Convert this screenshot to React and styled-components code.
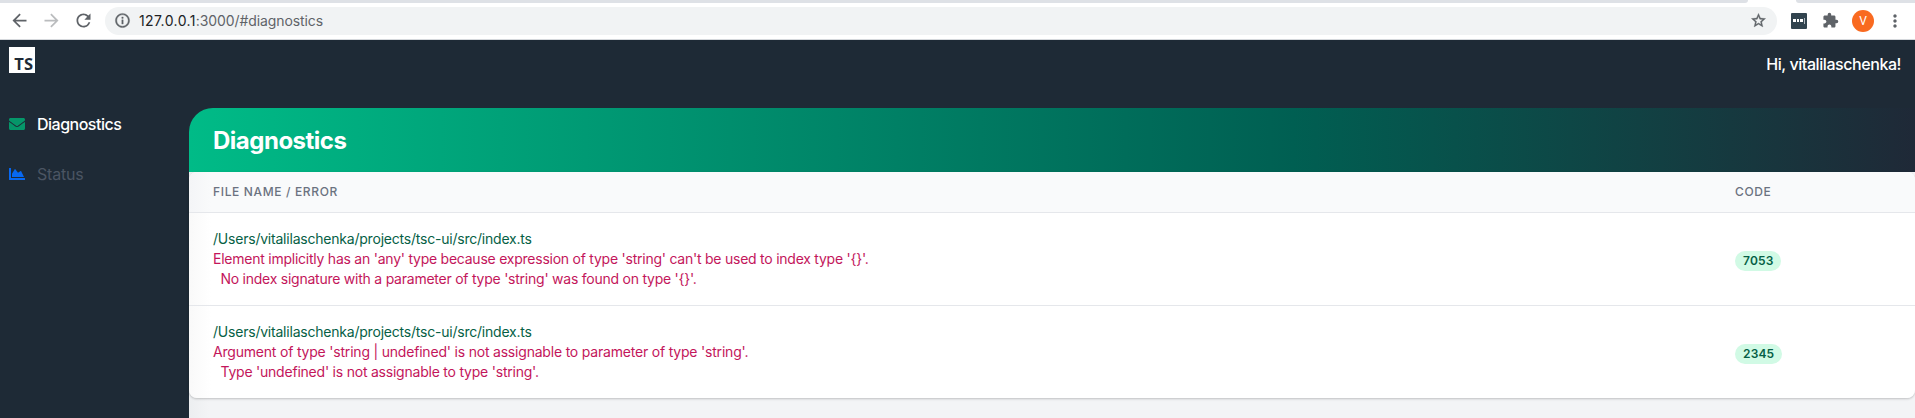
import React from 'react';
import styled, { createGlobalStyle } from 'styled-components';
import { MdArrowBack, MdArrowForward, MdRefresh, MdInfoOutline, MdStarBorder, MdExtension, MdMoreVert } from 'react-icons/md';
import { FaEnvelope, FaChartArea } from 'react-icons/fa';

const GlobalStyle = createGlobalStyle`
  * { box-sizing: border-box; }
  body { margin: 0; background: #f3f4f6; font-family: Inter, "Liberation Sans", sans-serif; }
  svg { display: block; flex-shrink: 0; }
`;

const Page = styled.div`
  height: 418px;
  display: flex;
  flex-direction: column;
  overflow: hidden;
`;

const TabStrip = styled.div`
  height: 3px;
  display: flex;
  background: #fff;
`;
const TabEdge = styled.div`
  width: ${(p) => p.$width};
  flex: ${(p) => (p.$width ? 'none' : 1)};
  margin-right: ${(p) => p.$gap || 0};
  background: #dee1e6;
  border-radius: ${(p) => p.$radius};
`;

const Toolbar = styled.div`
  height: 37px;
  display: flex;
  align-items: center;
  padding: 0 10px 1px 8px;
  background: #fff;
  border-bottom: 1px solid #d5d8dc;
  color: #5f6368;
`;
const NavButton = styled.span`
  width: 22px;
  height: 22px;
  margin-right: 10px;
  display: flex;
  align-items: center;
  justify-content: center;
  color: ${(p) => (p.$disabled ? '#babcbe' : '#5f6368')};
`;
const AddressBar = styled.div`
  flex: 1;
  height: 28px;
  margin-left: 1px;
  padding: 0 10px 0 9px;
  display: flex;
  align-items: center;
  border-radius: 14px;
  background: #f1f3f4;
  svg path:not([fill="none"]) { stroke: currentColor; stroke-width: 0.5px; }
  svg path[fill="none"] { stroke: none; }
`;
const Url = styled.span`
  flex: 1;
  margin-left: 8px;
  color: #5f6368;
  font: 14px/20px Inter, sans-serif;
  letter-spacing: -0.1px;
  white-space: nowrap;
`;
const Host = styled.span`
  color: #202124;
  letter-spacing: 0.4px;
`;
const PasswordBadge = styled.span`
  width: 16px;
  height: 16px;
  margin: 0 15px 0 14px;
  display: flex;
  align-items: center;
  justify-content: center;
  gap: 1px;
  border-radius: 1px;
  background: #32444f;
`;
const Mark = styled.i`
  width: ${(p) => (p.$bar ? 1 : 2.5)}px;
  height: ${(p) => (p.$bar ? 6 : 2.5)}px;
  background: ${(p) => (p.$bar ? '#b0b9bf' : '#fff')};
`;
const Avatar = styled.span`
  width: 22px;
  height: 22px;
  margin: 0 11px 0 13px;
  border-radius: 50%;
  background: #f96a20;
  color: #fff;
  font: 12px/23px Roboto, sans-serif;
  text-align: center;
`;

const AppBar = styled.header`
  height: 68px;
  flex: none;
  display: flex;
  justify-content: space-between;
  align-items: flex-start;
  padding: 7px 14px 0 9px;
  background: #1e2a36;
`;
const Logo = styled.div`
  width: 26px;
  height: 26px;
  padding: 6px 2px 0 0;
  background: #fff;
  color: #1e2a36;
  font: 700 16.5px/22px "Open Sans", sans-serif;
  text-align: right;
`;
const Greeting = styled.span`
  margin-top: 5px;
  color: #fff;
  font-size: 16px;
  font-weight: 500;
  line-height: 24px;
  letter-spacing: -0.43px;
`;

const Body = styled.div`
  flex: 1;
  display: flex;
  background: #1e2a36;
`;
const Sidebar = styled.nav`
  width: 189px;
  padding: 4px 9px;
`;
const NavItem = styled.a`
  height: 24px;
  margin-bottom: 26px;
  display: flex;
  align-items: center;
  gap: 12px;
  color: ${(p) => (p.$active ? '#fff' : '#4b5563')};
  font-size: 16px;
  font-weight: ${(p) => (p.$active ? 500 : 400)};
  line-height: 24px;
  letter-spacing: ${(p) => (p.$active ? '-0.5px' : '-0.2px')};
  svg { color: ${(p) => p.$icon}; }
`;

const Content = styled.main`
  flex: 1;
  display: flex;
  flex-direction: column;
`;
const Banner = styled.div`
  height: 64px;
  flex: none;
  padding: 17px 24px 15px;
  border-top-left-radius: 24px;
  background: linear-gradient(90deg, #00bb87 0%, #005f52 64%, #1f2937 100%);
`;
const Title = styled.h1`
  margin: 0;
  color: #fff;
  font-size: 24px;
  font-weight: 700;
  line-height: 32px;
  letter-spacing: -0.5px;
`;
const Panel = styled.div`
  flex: 1;
  background: linear-gradient(90deg, #eceef0 0, #f3f4f6 20px);
`;
const Table = styled.div`
  border-radius: 8px;
  overflow: hidden;
  background: linear-gradient(90deg, #f9f9f9 0, #fff 22px);
  box-shadow: 0 1px 3px rgba(0, 0, 0, 0.12), 0 1px 2px rgba(0, 0, 0, 0.1);
`;
const Row = styled.div`
  display: grid;
  grid-template-columns: 1522px 1fr;
  align-items: center;
  padding: ${(p) => (p.$head ? '12px 24px' : '16px 24px')};
  border-bottom: ${(p) => (p.$last ? 0 : '1px solid #e5e7eb')};
  background: ${(p) => (p.$head ? 'linear-gradient(90deg, #f4f5f7 0, #f9fafb 22px)' : 'none')};
`;
const HeadCell = styled.span`
  color: #6b7280;
  font-size: 12px;
  font-weight: 500;
  line-height: 16px;
  letter-spacing: 0.65px;
`;
const Message = styled.pre`
  margin: 0;
  color: ${(p) => (p.$path ? '#065f46' : '#c3165b')};
  font: 14px/20px Inter, sans-serif;
  letter-spacing: ${(p) => p.$spacing}px;
`;
const Code = styled.span`
  justify-self: start;
  height: 20px;
  margin-top: 4px;
  padding: 0 8px;
  border-radius: 10px;
  background: #d1fae5;
  color: #065f46;
  font-size: 12px;
  font-weight: 600;
  line-height: 20px;
  letter-spacing: 0.15px;
`;

const errors = [
  {
    code: 7053,
    lines: [
      ["Element implicitly has an 'any' type because expression of type 'string' can't be used to index type '{}'.", -0.24],
      ["  No index signature with a parameter of type 'string' was found on type '{}'.", -0.24],
    ],
  },
  {
    code: 2345,
    lines: [
      ["Argument of type 'string | undefined' is not assignable to parameter of type 'string'.", -0.2],
      ["  Type 'undefined' is not assignable to type 'string'.", -0.22],
    ],
  },
];

export default function App() {
  return (
    <>
      <GlobalStyle />
      <Page>
        <TabStrip>
          <TabEdge $width="1748px" $gap="48px" $radius="0 0 5px 0" />
          <TabEdge $radius="0 0 0 5px" />
        </TabStrip>
        <Toolbar>
          <NavButton><MdArrowBack size={21} /></NavButton>
          <NavButton $disabled><MdArrowForward size={21} /></NavButton>
          <NavButton><MdRefresh size={21} /></NavButton>
          <AddressBar>
            <MdInfoOutline size={17} />
            <Url><Host>127.0.0.1</Host>:3000/#diagnostics</Url>
            <MdStarBorder size={17} />
          </AddressBar>
          <PasswordBadge><Mark /><Mark /><Mark /><Mark $bar /></PasswordBadge>
          <MdExtension size={17} />
          <Avatar>V</Avatar>
          <MdMoreVert size={20} />
        </Toolbar>
        <AppBar>
          <Logo>TS</Logo>
          <Greeting>Hi, vitalilaschenka!</Greeting>
        </AppBar>
        <Body>
          <Sidebar>
            <NavItem $active $icon="#059669"><FaEnvelope size={16} />Diagnostics</NavItem>
            <NavItem $icon="#0768f2"><FaChartArea size={16} />Status</NavItem>
          </Sidebar>
          <Content>
            <Banner><Title>Diagnostics</Title></Banner>
            <Panel>
              <Table>
                <Row $head>
                  <HeadCell>FILE NAME / ERROR</HeadCell>
                  <HeadCell>CODE</HeadCell>
                </Row>
                {errors.map((e, i) => (
                  <Row key={e.code} $last={i === errors.length - 1}>
                    <div>
                      <Message $path $spacing={-0.215}>/Users/vitalilaschenka/projects/tsc-ui/src/index.ts</Message>
                      {e.lines.map(([line, spacing]) => <Message key={line} $spacing={spacing}>{line}</Message>)}
                    </div>
                    <Code>{e.code}</Code>
                  </Row>
                ))}
              </Table>
            </Panel>
          </Content>
        </Body>
      </Page>
    </>
  );
}
